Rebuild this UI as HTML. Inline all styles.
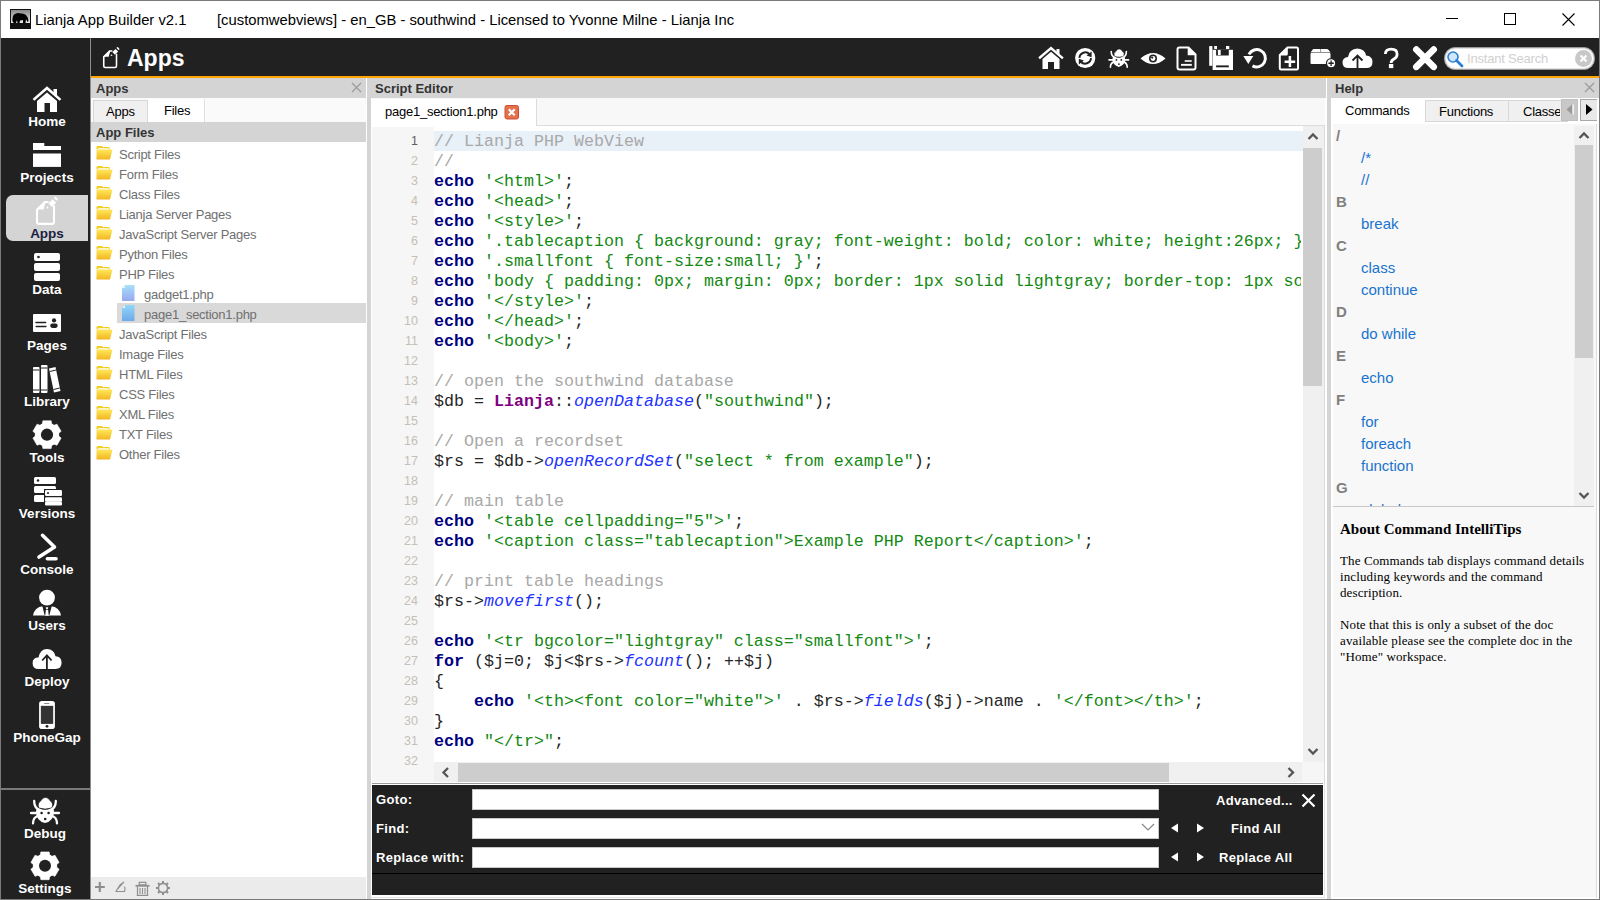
<!DOCTYPE html>
<html><head><meta charset="utf-8"><style>
*{margin:0;padding:0;box-sizing:border-box}
html,body{width:1600px;height:900px;overflow:hidden;background:#fff;font-family:"Liberation Sans",sans-serif}
.a{position:absolute}
.t{white-space:pre;position:absolute}
.si{position:absolute;left:3px;width:88px;text-align:center;color:#fff;font-weight:bold;font-size:13.5px;line-height:16px}
.ph{background:#d4d4d4}
.hd{font-size:13px;font-weight:bold;color:#333;line-height:18px}
.ui{font-size:13px;line-height:16px;letter-spacing:-0.25px}
.code{font-family:"Liberation Mono",monospace;font-size:16.67px;line-height:20px;color:#262626}
.kw{color:#000080;font-weight:bold}
.cm{color:#a8a8a8}
.st{color:#138913}
.fn{color:#2233ff;font-style:italic}
.cl{color:#800080;font-weight:bold}
.lnum{text-align:right;font-size:12.5px;line-height:20px}
.fl{font-size:13px;font-weight:bold;color:#fff;line-height:16px;letter-spacing:0.35px}
.hlp{color:#1874cd;font-size:15px;line-height:20px}
.hlh{color:#808080;font-size:15px;font-weight:bold;line-height:20px}
.serif{font-family:"Liberation Serif",serif;font-size:13px;color:#000;line-height:16px;letter-spacing:0.12px}
</style></head><body>
<div class="a" style="left:0;top:0;width:1600px;height:900px;border:1px solid #7a7a7a"></div>
<svg class="a" style="left:10px;top:9px" width="21" height="20" viewBox="0 0 21 20"><defs><linearGradient id="lg" x1="0" y1="0" x2="0" y2="1"><stop offset="0" stop-color="#8a8a8a"/><stop offset="1" stop-color="#e8e8e8"/></linearGradient></defs><rect x="0" y="0" width="21" height="20" fill="#111"/><rect x="1" y="1" width="19" height="13" fill="url(#lg)"/><path d="M2.5 12.5 Q2 6 5 5 Q8 3.5 11 4.5 Q14 4 16 6 Q18 8 18.5 12 L17.5 13 L16 10 L15.5 14 L13 14 L13 11 L10 11.5 L9.5 14 L7.5 14 L7 11 L6 14 L4 14 Z" fill="#000"/></svg>
<div class="t" id="tt1" style="left:35px;top:12px;font-size:14.8px;color:#000">Lianja App Builder v2.1</div>
<div class="t" id="tt2" style="left:217px;top:12px;font-size:14.8px;color:#000">[customwebviews] - en_GB - southwind - Licensed to Yvonne Milne - Lianja Inc</div>
<div class="a" style="left:1446px;top:18px;width:12px;height:1px;background:#000"></div>
<div class="a" style="left:1504px;top:13px;width:12px;height:12px;border:1px solid #000"></div>
<svg class="a" style="left:1562px;top:13px" width="13" height="13" viewBox="0 0 13 13"><path d="M0.5 0.5 L12.5 12.5 M12.5 0.5 L0.5 12.5" stroke="#000" stroke-width="1.1"/></svg>
<div class="a" style="left:1px;top:38px;width:89px;height:861px;background:#212121"></div>
<div class="a" style="left:90px;top:38px;width:1px;height:861px;background:#8c8c8c"></div>
<div class="a" style="left:1px;top:788px;width:89px;height:2px;background:#7a7a7a"></div>
<div class="a" style="left:6px;top:195px;width:82px;height:46px;background:#d4d4d4;border-radius:7px 0 0 7px"></div>
<div class="si" style="left:3px;top:114px;color:#fff">Home</div>
<div class="si" style="left:3px;top:170px;color:#fff">Projects</div>
<div class="si" style="left:3px;top:226px;color:#1a2040">Apps</div>
<div class="si" style="left:3px;top:282px;color:#fff">Data</div>
<div class="si" style="left:3px;top:338px;color:#fff">Pages</div>
<div class="si" style="left:3px;top:394px;color:#fff">Library</div>
<div class="si" style="left:3px;top:450px;color:#fff">Tools</div>
<div class="si" style="left:3px;top:506px;color:#fff">Versions</div>
<div class="si" style="left:3px;top:562px;color:#fff">Console</div>
<div class="si" style="left:3px;top:618px;color:#fff">Users</div>
<div class="si" style="left:3px;top:674px;color:#fff">Deploy</div>
<div class="si" style="left:3px;top:730px;color:#fff">PhoneGap</div>
<div class="si" style="left:1px;top:826px;color:#fff">Debug</div>
<div class="si" style="left:1px;top:881px;color:#fff">Settings</div>
<svg class="a" style="left:32px;top:85px" width="30" height="28" viewBox="0 0 30 28"><path d="M2.5 14 L15 3 L27.5 14" fill="none" stroke="#fff" stroke-width="2.6" stroke-linecap="square"/><rect x="21.5" y="4" width="3.5" height="6" fill="#fff"/><path d="M5 16 L15 7.5 L25 16 V27 H18 V18 H12.5 V27 H5 Z" fill="#fff"/></svg>
<svg class="a" style="left:33px;top:143px" width="28" height="25" viewBox="0 0 28 25"><path d="M0 0 H11.3 V2.9 H28 V7 H0 Z" fill="#fff"/><rect x="0" y="10.5" width="28" height="13.4" fill="#fff"/></svg>
<svg class="a" style="left:28px;top:190px" width="40" height="40" viewBox="0 0 40 40"><path d="M20.5 12 H16.8 L9 19.8 V32 Q9 33.9 10.9 33.9 H24.1 Q26 33.9 26 32 V15.5" fill="none" stroke="#fff" stroke-width="2.1"/><path d="M8.2 19.6 L16.9 10.9 L17.2 13.5 L15.6 19.6 Z" fill="#fff"/><path d="M28.2 12.75 L24.65 9.2 L20.4 13.45 L23.95 17 Z" fill="#fff"/><ellipse cx="28" cy="8.6" rx="2.4" ry="1.1" transform="rotate(45 28 8.6)" fill="#fff"/><path d="M18 18.6 L19.4 16.3 L20.8 18.2 Z" fill="#fff"/></svg>
<svg class="a" style="left:33px;top:252px" width="28" height="30" viewBox="0 0 28 30"><rect x="1" y="1" width="26" height="8" rx="2" fill="#fff"/><circle cx="5.5" cy="5" r="1.3" fill="#212121"/><rect x="1" y="11" width="26" height="8" rx="2" fill="#fff"/><rect x="1" y="21" width="26" height="8" rx="2" fill="#fff"/></svg>
<svg class="a" style="left:33px;top:314px" width="28" height="18" viewBox="0 0 28 18"><rect x="0" y="0" width="28" height="18" rx="1" fill="#fff"/><path d="M2.9 8.5 H12.7 M3.2 12.5 H13" stroke="#212121" stroke-width="1.3" stroke-linecap="round"/><circle cx="21" cy="6.4" r="2.1" fill="#212121"/><rect x="17.2" y="9.6" width="7.5" height="4.3" rx="2.1" fill="#212121"/></svg>
<svg class="a" style="left:32px;top:364px" width="30" height="30" viewBox="0 0 30 30"><rect x="1" y="3" width="6.5" height="26" rx="1" fill="#fff"/><rect x="9" y="1" width="6.5" height="28" rx="1" fill="#fff"/><path d="M17 4.5 L23.5 3 L28.5 27 L22 28.5 Z" fill="#fff"/><path d="M1 6 H7.5 M1 26 H7.5 M9 4 H15.5 M9 26 H15.5 M17.8 7.5 L24 6 M21.5 25.5 L27.8 24" stroke="#212121" stroke-width="1"/></svg>
<svg class="a" style="left:32px;top:419px" width="30" height="31" viewBox="0 0 30 31"><path d="M10.30 4.88 L10.85 1.81 L19.15 1.81 L19.70 4.88 L22.02 6.22 L24.96 5.16 L29.11 12.34 L26.72 14.36 L26.72 17.04 L29.11 19.06 L24.96 26.24 L22.02 25.18 L19.70 26.52 L19.15 29.59 L10.85 29.59 L10.30 26.52 L7.98 25.18 L5.04 26.24 L0.89 19.06 L3.28 17.04 L3.28 14.36 L0.89 12.34 L5.04 5.16 L7.98 6.22 Z" fill="#fff" stroke="#fff" stroke-width="0.6" stroke-linejoin="round"/><circle cx="15" cy="15.7" r="11.8" fill="#fff"/><circle cx="15" cy="15.7" r="6.1" fill="#212121"/></svg>
<svg class="a" style="left:33px;top:476px" width="30" height="30" viewBox="0 0 30 30"><rect x="1" y="1" width="22" height="7" rx="1.5" fill="#fff"/><circle cx="5" cy="4.5" r="1.2" fill="#212121"/><rect x="1" y="10" width="22" height="7" rx="1.5" fill="#fff"/><rect x="1" y="19" width="22" height="7" rx="1.5" fill="#fff"/><rect x="11" y="13" width="19" height="18" fill="#212121"/><rect x="12" y="14" width="17" height="6" rx="1.2" fill="#fff"/><circle cx="15" cy="17" r="1" fill="#212121"/><rect x="12" y="21.2" width="17" height="4.5" rx="1.2" fill="#fff"/><rect x="12" y="25.5" width="17" height="4" rx="1.2" fill="#fff"/></svg>
<svg class="a" style="left:34px;top:532px" width="28" height="30" viewBox="0 0 28 30"><path d="M8.5 3.3 L20.5 15 L5 25" fill="none" stroke="#fff" stroke-width="3.6" stroke-linecap="round" stroke-linejoin="round"/><path d="M13.3 26.8 H22.1" stroke="#fff" stroke-width="3.4" stroke-linecap="round"/></svg>
<svg class="a" style="left:33px;top:589px" width="28" height="28" viewBox="0 0 28 28"><circle cx="14" cy="8.6" r="7.9" fill="#fff"/><path d="M0 26.6 Q1.5 18 10 17.3 H18 Q26.5 18 28 26.6 Z" fill="#fff"/><path d="M9.3 17.1 H18.8 L16.4 26 H11.6 Z" fill="#212121"/><path d="M12.7 18.3 H15.3 L14.8 20 H13.2 Z M12.9 20.7 H15.1 L15.8 26.7 H12.2 Z" fill="#fff"/></svg>
<svg class="a" style="left:32px;top:647px" width="31" height="24" viewBox="0 0 31 24"><path d="M6.5 22 Q0.6 22 0.6 16 Q0.6 10.5 6.5 10.5 Q8 2 15 1.9 Q22 2 23.5 9.2 Q29.6 9.5 29.6 15.8 Q29.6 22 23.5 22 Z" fill="#fff"/><path d="M14.9 23 V8.4 M10.2 13.5 L14.9 8.4 L19.6 13.5" fill="none" stroke="#212121" stroke-width="1.8"/></svg>
<svg class="a" style="left:38px;top:700px" width="18" height="30" viewBox="0 0 18 30"><rect x="1.1" y="1" width="15.8" height="28" rx="2.8" fill="#fff"/><rect x="3.1" y="6.1" width="11.8" height="17.6" fill="#333" stroke="#1a1a1a" stroke-width="0.5"/><rect x="6" y="3" width="5.5" height="0.8" rx="0.4" fill="#666"/><circle cx="9" cy="26.3" r="1.4" fill="#212121"/></svg>
<svg class="a" style="left:30px;top:796px" width="32" height="30" viewBox="0 0 32 30"><path d="M6 15 Q6.5 11 9.5 12.5 Q15 15 20.5 12.5 Q23.5 11 24 15 Q24 25 15 27 Q6 25 6 15 Z" fill="#fff"/><path d="M8.6 12 Q7 7 10.8 4.8 Q12.5 1.3 15.5 1.3 Q18.5 1.3 20.2 4.8 Q24 7 22 12 Q15 14.3 8.6 12 Z" fill="#fff" stroke="#212121" stroke-width="0.9"/><path d="M4.2 5 Q4 12 10 14 M25.8 5 Q26 12 20 14 M1 17 H29 M3 27.4 Q3 21 9 19.5 M27 27.4 Q27 21 21 19.5" fill="none" stroke="#fff" stroke-width="2.3" stroke-linecap="round"/><circle cx="11.6" cy="17" r="1.3" fill="#212121"/><circle cx="18.6" cy="17" r="1.3" fill="#212121"/><circle cx="15.2" cy="23" r="1.3" fill="#212121"/></svg>
<svg class="a" style="left:30px;top:850px" width="30" height="31" viewBox="0 0 30 31"><path d="M10.30 4.98 L10.85 1.91 L19.15 1.91 L19.70 4.98 L22.02 6.32 L24.96 5.26 L29.11 12.44 L26.72 14.46 L26.72 17.14 L29.11 19.16 L24.96 26.34 L22.02 25.28 L19.70 26.62 L19.15 29.69 L10.85 29.69 L10.30 26.62 L7.98 25.28 L5.04 26.34 L0.89 19.16 L3.28 17.14 L3.28 14.46 L0.89 12.44 L5.04 5.26 L7.98 6.32 Z" fill="#fff" stroke="#fff" stroke-width="0.6" stroke-linejoin="round"/><circle cx="15" cy="15.8" r="11.8" fill="#fff"/><circle cx="15" cy="15.8" r="6.0" fill="#212121"/></svg>
<div class="a" style="left:91px;top:38px;width:1508px;height:38px;background:#212121"></div>
<div class="a" style="left:91px;top:76px;width:1508px;height:2px;background:#ffa500"></div>
<svg class="a" style="left:97px;top:42px" width="30" height="30" viewBox="0 0 30 30"><g transform="scale(0.75)"><path d="M20.5 12 H16.8 L9 19.8 V32 Q9 33.9 10.9 33.9 H24.1 Q26 33.9 26 32 V15.5" fill="none" stroke="#fff" stroke-width="2.1"/><path d="M8.2 19.6 L16.9 10.9 L17.2 13.5 L15.6 19.6 Z" fill="#fff"/><path d="M28.2 12.75 L24.65 9.2 L20.4 13.45 L23.95 17 Z" fill="#fff"/><ellipse cx="28" cy="8.6" rx="2.4" ry="1.1" transform="rotate(45 28 8.6)" fill="#fff"/><path d="M18 18.6 L19.4 16.3 L20.8 18.2 Z" fill="#fff"/></g></svg>
<div class="t" style="left:127px;top:45px;font-size:23px;font-weight:bold;color:#fff">Apps</div>
<svg class="a" style="left:1038px;top:46px" width="26" height="24" viewBox="0 0 26 24"><path d="M2 11.5 L13 2 L24 11.5" fill="none" stroke="#fff" stroke-width="2.4" stroke-linecap="square"/><rect x="18.5" y="3" width="3" height="5" fill="#fff"/><path d="M4.5 13 L13 5.8 L21.5 13 V23 H16 V16 H10 V23 H4.5 Z" fill="#fff"/></svg>
<svg class="a" style="left:1075px;top:47px" width="22" height="22" viewBox="0 0 22 22"><circle cx="10.2" cy="11" r="10.1" fill="#fff"/><path d="M4.4 10.8 A5.9 5.9 0 0 1 14.6 7.3" fill="none" stroke="#212121" stroke-width="2"/><path d="M16.6 4.6 L16.6 10.2 L11.5 8.6 Z" fill="#212121"/><path d="M16 11.2 A5.9 5.9 0 0 1 5.8 14.7" fill="none" stroke="#212121" stroke-width="2"/><path d="M3.8 17.4 L3.8 11.8 L8.9 13.4 Z" fill="#212121"/></svg>
<svg class="a" style="left:1108px;top:47px" width="22" height="22" viewBox="0 0 22 22"><g transform="translate(0.3 1) scale(0.7)"><path d="M6 15 Q6.5 11 9.5 12.5 Q15 15 20.5 12.5 Q23.5 11 24 15 Q24 25 15 27 Q6 25 6 15 Z" fill="#fff"/><path d="M8.6 12 Q7 7 10.8 4.8 Q12.5 1.3 15.5 1.3 Q18.5 1.3 20.2 4.8 Q24 7 22 12 Q15 14.3 8.6 12 Z" fill="#fff" stroke="#212121" stroke-width="0.9"/><path d="M4.2 5 Q4 12 10 14 M25.8 5 Q26 12 20 14 M1 17 H29 M3 27.4 Q3 21 9 19.5 M27 27.4 Q27 21 21 19.5" fill="none" stroke="#fff" stroke-width="2.3" stroke-linecap="round"/><circle cx="11.6" cy="17" r="1.3" fill="#212121"/><circle cx="18.6" cy="17" r="1.3" fill="#212121"/><circle cx="15.2" cy="23" r="1.3" fill="#212121"/></g></svg>
<svg class="a" style="left:1140px;top:52px" width="26" height="13" viewBox="0 0 26 13"><path d="M0.5 6.5 Q13 -4.5 25.5 6.5 Q13 17.5 0.5 6.5 Z" fill="#fff"/><circle cx="13" cy="6.5" r="4" fill="#212121"/><circle cx="13" cy="6.5" r="2.4" fill="#fff"/><circle cx="12.2" cy="5.6" r="1.1" fill="#212121"/></svg>
<svg class="a" style="left:1176px;top:46px" width="22" height="25" viewBox="0 0 22 25"><path d="M3.5 1.5 H12.5 L19.5 8.5 V21.5 Q19.5 23.5 17.5 23.5 H3.5 Q1.5 23.5 1.5 21.5 V3.5 Q1.5 1.5 3.5 1.5 Z" fill="none" stroke="#fff" stroke-width="2"/><path d="M12.5 1.5 V8.5 H19.5" fill="#fff" stroke="#fff" stroke-width="1.6"/><rect x="8.7" y="14.2" width="7" height="1.6" fill="#fff"/><rect x="5" y="17.9" width="10.8" height="1.9" fill="#fff"/></svg>
<svg class="a" style="left:1208px;top:46px" width="27" height="25" viewBox="0 0 27 25"><rect x="1.2" y="0.1" width="3.2" height="19.7" fill="#fff"/><rect x="6.2" y="0" width="2.8" height="3" fill="#fff"/><rect x="18" y="0" width="3.3" height="3" fill="#fff"/><rect x="4.6" y="3.8" width="20.4" height="20.2" fill="#fff"/><rect x="8.1" y="3.8" width="12.7" height="5.7" fill="#212121"/><rect x="9.9" y="4" width="2.8" height="5" fill="#fff"/><rect x="8.1" y="19.4" width="12.7" height="1.9" fill="#212121"/></svg>
<svg class="a" style="left:1242px;top:47px" width="26" height="24" viewBox="0 0 26 24"><path d="M10.5 18.9 A8.7 8.7 0 1 0 6.9 7.4" fill="none" stroke="#fff" stroke-width="3"/><path d="M1.3 9 L11.3 9 L6.3 16.9 Z" fill="#fff"/></svg>
<svg class="a" style="left:1278px;top:46px" width="22" height="25" viewBox="0 0 22 25"><path d="M1.8 9 L9.5 1.5 H18.5 Q20 1.5 20 3 V22 Q20 23.5 18.5 23.5 H3.3 Q1.8 23.5 1.8 22 Z" fill="none" stroke="#fff" stroke-width="2"/><path d="M1.8 9.5 L9.8 1.5 V8 Q9.8 9.5 8.3 9.5 Z" fill="#fff"/><path d="M11.9 10 V21 M6.6 15.7 H17.2" stroke="#fff" stroke-width="2.5"/></svg>
<svg class="a" style="left:1310px;top:48px" width="28" height="20" viewBox="0 0 28 20"><path d="M3.5 1 H16.5 Q18 1 18.8 2.2 L20.5 4.5 H0.5 L2.2 2.2 Q3 1 3.5 1 Z" fill="#fff"/><rect x="10.2" y="1" width="0.9" height="3.5" fill="#888"/><rect x="0.5" y="5" width="20" height="11" rx="1" fill="#fff"/><circle cx="21.1" cy="15.25" r="4.6" fill="#fff" stroke="#212121" stroke-width="1.2"/><path d="M21.1 12.5 V18 M18.4 15.25 H23.8" stroke="#212121" stroke-width="1.3"/></svg>
<svg class="a" style="left:1342px;top:47px" width="31" height="22" viewBox="0 0 31 22"><path d="M6.5 21 Q0.5 21 0.5 15.5 Q0.5 10.5 6 10 Q7 2 15.5 1.5 Q23 2 24 8.5 Q30.5 9 30.5 15 Q30.5 21 24.5 21 Z" fill="#fff"/><path d="M15.5 22 V8.5 M10.5 13.5 L15.5 8.5 L20.5 13.5" fill="none" stroke="#212121" stroke-width="1.8"/></svg>
<svg class="a" style="left:1382px;top:47px" width="18" height="22" viewBox="0 0 18 22"><path d="M3.4 7 Q3.4 2.2 9.2 2.2 Q15.1 2.2 15.1 7.2 Q15.1 10.2 12 12 Q9.1 13.6 9.1 16" fill="none" stroke="#fff" stroke-width="2.8"/><rect x="6.9" y="17" width="4.4" height="4.1" fill="#fff"/></svg>
<svg class="a" style="left:1412px;top:46px" width="26" height="25" viewBox="0 0 26 25"><path d="M4.3 3.5 L21.7 20.8 M21.7 3.5 L4.3 20.8" stroke="#fff" stroke-width="6.6" stroke-linecap="round"/></svg>
<div class="a" style="left:1444px;top:47px;width:151px;height:23px;border-radius:11px;background:#fff;border:1.5px solid #9a9a9a;box-shadow:inset 0 0 0 1px #e0e0e0"></div>
<svg class="a" style="left:1446px;top:50px" width="19" height="18" viewBox="0 0 19 18"><circle cx="7" cy="7" r="5" fill="#cfe6fb" stroke="#2a7fd4" stroke-width="1.6"/><path d="M10.5 10.5 L16 16" stroke="#2a7fd4" stroke-width="2.8" stroke-linecap="round"/></svg>
<div class="t" style="left:1467px;top:51px;font-size:13px;color:#d0d0d0;letter-spacing:-0.2px">Instant Search</div>
<svg class="a" style="left:1574px;top:49px" width="19" height="19" viewBox="0 0 19 19"><circle cx="9.5" cy="9.5" r="8.5" fill="#c8c8c8"/><path d="M6.5 6.5 L12.5 12.5 M12.5 6.5 L6.5 12.5" stroke="#fff" stroke-width="2.2"/></svg>
<div class="a ph" style="left:91px;top:78px;width:275px;height:20px"></div>
<div class="t hd" style="left:96px;top:80px">Apps</div>
<svg class="a" style="left:351px;top:82px" width="11" height="11" viewBox="0 0 11 11"><path d="M1 1 L10 10 M10 1 L1 10" stroke="#9a9a9a" stroke-width="1.2"/></svg>
<div class="a" style="left:91px;top:98px;width:275px;height:24px;background:#fafafa"></div>
<div class="a" style="left:93px;top:100px;width:55px;height:22px;background:#f0f0f0;border:1px solid #d8d8d8;border-bottom:none"></div>
<div class="a" style="left:148px;top:99px;width:57px;height:23px;background:#fff;border-right:1px solid #e0e0e0"></div>
<div class="t ui" style="left:106px;top:104px;color:#000">Apps</div>
<div class="t ui" style="left:164px;top:103px;color:#000">Files</div>
<div class="a ph" style="left:91px;top:122px;width:275px;height:20px"></div>
<div class="t hd" style="left:96px;top:124px">App Files</div>
<div class="a" style="left:117px;top:303px;width:249px;height:20px;background:#d9d9d9"></div>
<svg class="a" style="left:96px;top:146px" width="17" height="14" viewBox="0 0 17 14"><defs><linearGradient id="fg" x1="0" y1="0" x2="0" y2="1"><stop offset="0" stop-color="#ffe85a"/><stop offset="1" stop-color="#f2b620"/></linearGradient></defs><path d="M0.5 1 Q0.5 0 1.5 0 H6 L7 1 H13.5 V3 H0.5 Z" fill="#f5d020"/><rect x="1.5" y="2" width="11.5" height="3" fill="#fff" stroke="#e8c840" stroke-width="0.5"/><path d="M0.5 13.5 V3.5 H16.5 L14 13.5 Z" fill="url(#fg)"/></svg>
<div class="t ui" style="left:119px;top:147px;color:#707070">Script Files</div>
<svg class="a" style="left:96px;top:166px" width="17" height="14" viewBox="0 0 17 14"><defs><linearGradient id="fg" x1="0" y1="0" x2="0" y2="1"><stop offset="0" stop-color="#ffe85a"/><stop offset="1" stop-color="#f2b620"/></linearGradient></defs><path d="M0.5 1 Q0.5 0 1.5 0 H6 L7 1 H13.5 V3 H0.5 Z" fill="#f5d020"/><rect x="1.5" y="2" width="11.5" height="3" fill="#fff" stroke="#e8c840" stroke-width="0.5"/><path d="M0.5 13.5 V3.5 H16.5 L14 13.5 Z" fill="url(#fg)"/></svg>
<div class="t ui" style="left:119px;top:167px;color:#707070">Form Files</div>
<svg class="a" style="left:96px;top:186px" width="17" height="14" viewBox="0 0 17 14"><defs><linearGradient id="fg" x1="0" y1="0" x2="0" y2="1"><stop offset="0" stop-color="#ffe85a"/><stop offset="1" stop-color="#f2b620"/></linearGradient></defs><path d="M0.5 1 Q0.5 0 1.5 0 H6 L7 1 H13.5 V3 H0.5 Z" fill="#f5d020"/><rect x="1.5" y="2" width="11.5" height="3" fill="#fff" stroke="#e8c840" stroke-width="0.5"/><path d="M0.5 13.5 V3.5 H16.5 L14 13.5 Z" fill="url(#fg)"/></svg>
<div class="t ui" style="left:119px;top:187px;color:#707070">Class Files</div>
<svg class="a" style="left:96px;top:206px" width="17" height="14" viewBox="0 0 17 14"><defs><linearGradient id="fg" x1="0" y1="0" x2="0" y2="1"><stop offset="0" stop-color="#ffe85a"/><stop offset="1" stop-color="#f2b620"/></linearGradient></defs><path d="M0.5 1 Q0.5 0 1.5 0 H6 L7 1 H13.5 V3 H0.5 Z" fill="#f5d020"/><rect x="1.5" y="2" width="11.5" height="3" fill="#fff" stroke="#e8c840" stroke-width="0.5"/><path d="M0.5 13.5 V3.5 H16.5 L14 13.5 Z" fill="url(#fg)"/></svg>
<div class="t ui" style="left:119px;top:207px;color:#707070">Lianja Server Pages</div>
<svg class="a" style="left:96px;top:226px" width="17" height="14" viewBox="0 0 17 14"><defs><linearGradient id="fg" x1="0" y1="0" x2="0" y2="1"><stop offset="0" stop-color="#ffe85a"/><stop offset="1" stop-color="#f2b620"/></linearGradient></defs><path d="M0.5 1 Q0.5 0 1.5 0 H6 L7 1 H13.5 V3 H0.5 Z" fill="#f5d020"/><rect x="1.5" y="2" width="11.5" height="3" fill="#fff" stroke="#e8c840" stroke-width="0.5"/><path d="M0.5 13.5 V3.5 H16.5 L14 13.5 Z" fill="url(#fg)"/></svg>
<div class="t ui" style="left:119px;top:227px;color:#707070">JavaScript Server Pages</div>
<svg class="a" style="left:96px;top:246px" width="17" height="14" viewBox="0 0 17 14"><defs><linearGradient id="fg" x1="0" y1="0" x2="0" y2="1"><stop offset="0" stop-color="#ffe85a"/><stop offset="1" stop-color="#f2b620"/></linearGradient></defs><path d="M0.5 1 Q0.5 0 1.5 0 H6 L7 1 H13.5 V3 H0.5 Z" fill="#f5d020"/><rect x="1.5" y="2" width="11.5" height="3" fill="#fff" stroke="#e8c840" stroke-width="0.5"/><path d="M0.5 13.5 V3.5 H16.5 L14 13.5 Z" fill="url(#fg)"/></svg>
<div class="t ui" style="left:119px;top:247px;color:#707070">Python Files</div>
<svg class="a" style="left:96px;top:266px" width="17" height="14" viewBox="0 0 17 14"><defs><linearGradient id="fg" x1="0" y1="0" x2="0" y2="1"><stop offset="0" stop-color="#ffe85a"/><stop offset="1" stop-color="#f2b620"/></linearGradient></defs><path d="M0.5 1 Q0.5 0 1.5 0 H6 L7 1 H13.5 V3 H0.5 Z" fill="#f5d020"/><rect x="1.5" y="2" width="11.5" height="3" fill="#fff" stroke="#e8c840" stroke-width="0.5"/><path d="M0.5 13.5 V3.5 H16.5 L14 13.5 Z" fill="url(#fg)"/></svg>
<div class="t ui" style="left:119px;top:267px;color:#707070">PHP Files</div>
<svg class="a" style="left:96px;top:326px" width="17" height="14" viewBox="0 0 17 14"><defs><linearGradient id="fg" x1="0" y1="0" x2="0" y2="1"><stop offset="0" stop-color="#ffe85a"/><stop offset="1" stop-color="#f2b620"/></linearGradient></defs><path d="M0.5 1 Q0.5 0 1.5 0 H6 L7 1 H13.5 V3 H0.5 Z" fill="#f5d020"/><rect x="1.5" y="2" width="11.5" height="3" fill="#fff" stroke="#e8c840" stroke-width="0.5"/><path d="M0.5 13.5 V3.5 H16.5 L14 13.5 Z" fill="url(#fg)"/></svg>
<div class="t ui" style="left:119px;top:327px;color:#707070">JavaScript Files</div>
<svg class="a" style="left:96px;top:346px" width="17" height="14" viewBox="0 0 17 14"><defs><linearGradient id="fg" x1="0" y1="0" x2="0" y2="1"><stop offset="0" stop-color="#ffe85a"/><stop offset="1" stop-color="#f2b620"/></linearGradient></defs><path d="M0.5 1 Q0.5 0 1.5 0 H6 L7 1 H13.5 V3 H0.5 Z" fill="#f5d020"/><rect x="1.5" y="2" width="11.5" height="3" fill="#fff" stroke="#e8c840" stroke-width="0.5"/><path d="M0.5 13.5 V3.5 H16.5 L14 13.5 Z" fill="url(#fg)"/></svg>
<div class="t ui" style="left:119px;top:347px;color:#707070">Image Files</div>
<svg class="a" style="left:96px;top:366px" width="17" height="14" viewBox="0 0 17 14"><defs><linearGradient id="fg" x1="0" y1="0" x2="0" y2="1"><stop offset="0" stop-color="#ffe85a"/><stop offset="1" stop-color="#f2b620"/></linearGradient></defs><path d="M0.5 1 Q0.5 0 1.5 0 H6 L7 1 H13.5 V3 H0.5 Z" fill="#f5d020"/><rect x="1.5" y="2" width="11.5" height="3" fill="#fff" stroke="#e8c840" stroke-width="0.5"/><path d="M0.5 13.5 V3.5 H16.5 L14 13.5 Z" fill="url(#fg)"/></svg>
<div class="t ui" style="left:119px;top:367px;color:#707070">HTML Files</div>
<svg class="a" style="left:96px;top:386px" width="17" height="14" viewBox="0 0 17 14"><defs><linearGradient id="fg" x1="0" y1="0" x2="0" y2="1"><stop offset="0" stop-color="#ffe85a"/><stop offset="1" stop-color="#f2b620"/></linearGradient></defs><path d="M0.5 1 Q0.5 0 1.5 0 H6 L7 1 H13.5 V3 H0.5 Z" fill="#f5d020"/><rect x="1.5" y="2" width="11.5" height="3" fill="#fff" stroke="#e8c840" stroke-width="0.5"/><path d="M0.5 13.5 V3.5 H16.5 L14 13.5 Z" fill="url(#fg)"/></svg>
<div class="t ui" style="left:119px;top:387px;color:#707070">CSS Files</div>
<svg class="a" style="left:96px;top:406px" width="17" height="14" viewBox="0 0 17 14"><defs><linearGradient id="fg" x1="0" y1="0" x2="0" y2="1"><stop offset="0" stop-color="#ffe85a"/><stop offset="1" stop-color="#f2b620"/></linearGradient></defs><path d="M0.5 1 Q0.5 0 1.5 0 H6 L7 1 H13.5 V3 H0.5 Z" fill="#f5d020"/><rect x="1.5" y="2" width="11.5" height="3" fill="#fff" stroke="#e8c840" stroke-width="0.5"/><path d="M0.5 13.5 V3.5 H16.5 L14 13.5 Z" fill="url(#fg)"/></svg>
<div class="t ui" style="left:119px;top:407px;color:#707070">XML Files</div>
<svg class="a" style="left:96px;top:426px" width="17" height="14" viewBox="0 0 17 14"><defs><linearGradient id="fg" x1="0" y1="0" x2="0" y2="1"><stop offset="0" stop-color="#ffe85a"/><stop offset="1" stop-color="#f2b620"/></linearGradient></defs><path d="M0.5 1 Q0.5 0 1.5 0 H6 L7 1 H13.5 V3 H0.5 Z" fill="#f5d020"/><rect x="1.5" y="2" width="11.5" height="3" fill="#fff" stroke="#e8c840" stroke-width="0.5"/><path d="M0.5 13.5 V3.5 H16.5 L14 13.5 Z" fill="url(#fg)"/></svg>
<div class="t ui" style="left:119px;top:427px;color:#707070">TXT Files</div>
<svg class="a" style="left:96px;top:446px" width="17" height="14" viewBox="0 0 17 14"><defs><linearGradient id="fg" x1="0" y1="0" x2="0" y2="1"><stop offset="0" stop-color="#ffe85a"/><stop offset="1" stop-color="#f2b620"/></linearGradient></defs><path d="M0.5 1 Q0.5 0 1.5 0 H6 L7 1 H13.5 V3 H0.5 Z" fill="#f5d020"/><rect x="1.5" y="2" width="11.5" height="3" fill="#fff" stroke="#e8c840" stroke-width="0.5"/><path d="M0.5 13.5 V3.5 H16.5 L14 13.5 Z" fill="url(#fg)"/></svg>
<div class="t ui" style="left:119px;top:447px;color:#707070">Other Files</div>
<svg class="a" style="left:122px;top:285px" width="13" height="16" viewBox="0 0 13 16"><defs><linearGradient id="fi1" x1="0" y1="0" x2="0" y2="1"><stop offset="0" stop-color="#a8e0f8"/><stop offset="1" stop-color="#98a8f0"/></linearGradient></defs><path d="M3 0 H12.5 V16 H0 V3 Z" fill="url(#fi1)"/><path d="M0 3 L3 0 V3 Z" fill="#e8f4fc"/></svg>
<div class="t ui" style="left:144px;top:287px;color:#707070">gadget1.php</div>
<svg class="a" style="left:122px;top:305px" width="13" height="16" viewBox="0 0 13 16"><defs><linearGradient id="fi2" x1="0" y1="0" x2="0" y2="1"><stop offset="0" stop-color="#90d8f8"/><stop offset="1" stop-color="#70a8e8"/></linearGradient></defs><path d="M3 0 H12.5 V16 H0 V3 Z" fill="url(#fi2)"/><path d="M0 3 L3 0 V3 Z" fill="#e8f4fc"/></svg>
<div class="t ui" style="left:144px;top:307px;color:#707070">page1_section1.php</div>
<div class="a" style="left:91px;top:877px;width:275px;height:22px;background:#ebebeb"></div>
<svg class="a" style="left:94px;top:881px" width="12" height="12" viewBox="0 0 12 12"><path d="M5.8 1 V11 M1 6 H10.8" stroke="#8e8e8e" stroke-width="2.2"/></svg>
<svg class="a" style="left:114px;top:881px" width="13" height="12" viewBox="0 0 13 12"><path d="M1.5 10.5 L9.5 1.5 M2.5 9.5 L6 4 L10 1 M1.5 10.5 H10.5 Q11.5 8 10.5 5.5" fill="none" stroke="#8e8e8e" stroke-width="1.1"/></svg>
<svg class="a" style="left:135px;top:881px" width="15" height="16" viewBox="0 0 15 16"><rect x="4.2" y="1.3" width="6.6" height="2.6" fill="none" stroke="#8e8e8e" stroke-width="1.2"/><path d="M0.5 4.8 H14.5" stroke="#8e8e8e" stroke-width="1.8"/><path d="M2.5 5.5 V14.3 H12.5 V5.5 M1.7 14.5 H13.3" fill="none" stroke="#8e8e8e" stroke-width="1.2"/><path d="M5 7 V13 M7.5 7 V13 M10 7 V13" stroke="#8e8e8e" stroke-width="1.1"/></svg>
<svg class="a" style="left:156px;top:881px" width="14" height="14" viewBox="0 0 14 14"><rect x="6" y="0" width="2" height="3" fill="#8e8e8e" transform="rotate(0 7 7)"/><rect x="6" y="0" width="2" height="3" fill="#8e8e8e" transform="rotate(45 7 7)"/><rect x="6" y="0" width="2" height="3" fill="#8e8e8e" transform="rotate(90 7 7)"/><rect x="6" y="0" width="2" height="3" fill="#8e8e8e" transform="rotate(135 7 7)"/><rect x="6" y="0" width="2" height="3" fill="#8e8e8e" transform="rotate(180 7 7)"/><rect x="6" y="0" width="2" height="3" fill="#8e8e8e" transform="rotate(225 7 7)"/><rect x="6" y="0" width="2" height="3" fill="#8e8e8e" transform="rotate(270 7 7)"/><rect x="6" y="0" width="2" height="3" fill="#8e8e8e" transform="rotate(315 7 7)"/><circle cx="7" cy="7" r="4.6" fill="none" stroke="#8e8e8e" stroke-width="1.6"/></svg>
<div class="a ph" style="left:367px;top:78px;width:959px;height:20px"></div>
<div class="a ph" style="left:367px;top:98px;width:4px;height:801px"></div>
<div class="t hd" style="left:375px;top:80px">Script Editor</div>
<div class="a" style="left:371px;top:98px;width:954px;height:27px;background:#f8f8f8"></div>
<div class="a" style="left:371px;top:99px;width:166px;height:27px;background:#fff;border-right:1px solid #dcdcdc"></div>
<div class="t ui" style="left:385px;top:104px;color:#000">page1_section1.php</div>
<svg class="a" style="left:504px;top:105px" width="15" height="15" viewBox="0 0 15 15"><rect x="1" y="0.5" width="13.5" height="13.5" rx="2" fill="#e4704c" stroke="#d04a32"/><path d="M4.8 4.3 L10.7 10.2 M10.7 4.3 L4.8 10.2" stroke="#fff" stroke-width="2.2"/></svg>
<div class="a" style="left:537px;top:125px;width:788px;height:1px;background:#dcdcdc"></div>
<div class="a" style="left:371px;top:126px;width:954px;height:658px;background:#fff"></div>
<div class="a" style="left:1324px;top:125px;width:1px;height:659px;background:#dcdcdc"></div>
<div class="a" style="left:372px;top:127px;width:62px;height:655px;background:#f6f6f6"></div>
<div class="a" style="left:434px;top:131px;width:869px;height:20px;background:#e8f0f8"></div>
<div class="t lnum" style="left:372px;top:131px;width:46px;color:#606060">1</div>
<div class="t lnum" style="left:372px;top:151px;width:46px;color:#c4c0b8">2</div>
<div class="t lnum" style="left:372px;top:171px;width:46px;color:#c4c0b8">3</div>
<div class="t lnum" style="left:372px;top:191px;width:46px;color:#c4c0b8">4</div>
<div class="t lnum" style="left:372px;top:211px;width:46px;color:#c4c0b8">5</div>
<div class="t lnum" style="left:372px;top:231px;width:46px;color:#c4c0b8">6</div>
<div class="t lnum" style="left:372px;top:251px;width:46px;color:#c4c0b8">7</div>
<div class="t lnum" style="left:372px;top:271px;width:46px;color:#c4c0b8">8</div>
<div class="t lnum" style="left:372px;top:291px;width:46px;color:#c4c0b8">9</div>
<div class="t lnum" style="left:372px;top:311px;width:46px;color:#c4c0b8">10</div>
<div class="t lnum" style="left:372px;top:331px;width:46px;color:#c4c0b8">11</div>
<div class="t lnum" style="left:372px;top:351px;width:46px;color:#c4c0b8">12</div>
<div class="t lnum" style="left:372px;top:371px;width:46px;color:#c4c0b8">13</div>
<div class="t lnum" style="left:372px;top:391px;width:46px;color:#c4c0b8">14</div>
<div class="t lnum" style="left:372px;top:411px;width:46px;color:#c4c0b8">15</div>
<div class="t lnum" style="left:372px;top:431px;width:46px;color:#c4c0b8">16</div>
<div class="t lnum" style="left:372px;top:451px;width:46px;color:#c4c0b8">17</div>
<div class="t lnum" style="left:372px;top:471px;width:46px;color:#c4c0b8">18</div>
<div class="t lnum" style="left:372px;top:491px;width:46px;color:#c4c0b8">19</div>
<div class="t lnum" style="left:372px;top:511px;width:46px;color:#c4c0b8">20</div>
<div class="t lnum" style="left:372px;top:531px;width:46px;color:#c4c0b8">21</div>
<div class="t lnum" style="left:372px;top:551px;width:46px;color:#c4c0b8">22</div>
<div class="t lnum" style="left:372px;top:571px;width:46px;color:#c4c0b8">23</div>
<div class="t lnum" style="left:372px;top:591px;width:46px;color:#c4c0b8">24</div>
<div class="t lnum" style="left:372px;top:611px;width:46px;color:#c4c0b8">25</div>
<div class="t lnum" style="left:372px;top:631px;width:46px;color:#c4c0b8">26</div>
<div class="t lnum" style="left:372px;top:651px;width:46px;color:#c4c0b8">27</div>
<div class="t lnum" style="left:372px;top:671px;width:46px;color:#c4c0b8">28</div>
<div class="t lnum" style="left:372px;top:691px;width:46px;color:#c4c0b8">29</div>
<div class="t lnum" style="left:372px;top:711px;width:46px;color:#c4c0b8">30</div>
<div class="t lnum" style="left:372px;top:731px;width:46px;color:#c4c0b8">31</div>
<div class="t lnum" style="left:372px;top:751px;width:46px;color:#c4c0b8">32</div>
<div class="a" style="left:434px;top:126px;width:867px;height:636px;overflow:hidden"><div class="t code" style="left:0px;top:6px"><span class="cm">// Lianja PHP WebView</span></div><div class="t code" style="left:0px;top:26px"><span class="cm">//</span></div><div class="t code" style="left:0px;top:46px"><span class="kw">echo</span> <span class="st">'&lt;html&gt;'</span>;</div><div class="t code" style="left:0px;top:66px"><span class="kw">echo</span> <span class="st">'&lt;head&gt;'</span>;</div><div class="t code" style="left:0px;top:86px"><span class="kw">echo</span> <span class="st">'&lt;style&gt;'</span>;</div><div class="t code" style="left:0px;top:106px"><span class="kw">echo</span> <span class="st">'.tablecaption { background: gray; font-weight: bold; color: white; height:26px; }'</span>;</div><div class="t code" style="left:0px;top:126px"><span class="kw">echo</span> <span class="st">'.smallfont { font-size:small; }'</span>;</div><div class="t code" style="left:0px;top:146px"><span class="kw">echo</span> <span class="st">'body { padding: 0px; margin: 0px; border: 1px solid lightgray; border-top: 1px solid lightgray; }'</span>;</div><div class="t code" style="left:0px;top:166px"><span class="kw">echo</span> <span class="st">'&lt;/style&gt;'</span>;</div><div class="t code" style="left:0px;top:186px"><span class="kw">echo</span> <span class="st">'&lt;/head&gt;'</span>;</div><div class="t code" style="left:0px;top:206px"><span class="kw">echo</span> <span class="st">'&lt;body&gt;'</span>;</div><div class="t code" style="left:0px;top:226px"></div><div class="t code" style="left:0px;top:246px"><span class="cm">// open the southwind database</span></div><div class="t code" style="left:0px;top:266px">$db = <span class="cl">Lianja</span>::<span class="fn">openDatabase</span>(<span class="st">"southwind"</span>);</div><div class="t code" style="left:0px;top:286px"></div><div class="t code" style="left:0px;top:306px"><span class="cm">// Open a recordset</span></div><div class="t code" style="left:0px;top:326px">$rs = $db-&gt;<span class="fn">openRecordSet</span>(<span class="st">"select * from example"</span>);</div><div class="t code" style="left:0px;top:346px"></div><div class="t code" style="left:0px;top:366px"><span class="cm">// main table</span></div><div class="t code" style="left:0px;top:386px"><span class="kw">echo</span> <span class="st">'&lt;table cellpadding="5"&gt;'</span>;</div><div class="t code" style="left:0px;top:406px"><span class="kw">echo</span> <span class="st">'&lt;caption class="tablecaption"&gt;Example PHP Report&lt;/caption&gt;'</span>;</div><div class="t code" style="left:0px;top:426px"></div><div class="t code" style="left:0px;top:446px"><span class="cm">// print table headings</span></div><div class="t code" style="left:0px;top:466px">$rs-&gt;<span class="fn">movefirst</span>();</div><div class="t code" style="left:0px;top:486px"></div><div class="t code" style="left:0px;top:506px"><span class="kw">echo</span> <span class="st">'&lt;tr bgcolor="lightgray" class="smallfont"&gt;'</span>;</div><div class="t code" style="left:0px;top:526px"><span class="kw">for</span> ($j=0; $j&lt;$rs-&gt;<span class="fn">fcount</span>(); ++$j)</div><div class="t code" style="left:0px;top:546px">{</div><div class="t code" style="left:0px;top:566px">    <span class="kw">echo</span> <span class="st">'&lt;th&gt;&lt;font color="white"&gt;'</span> . $rs-&gt;<span class="fn">fields</span>($j)-&gt;name . <span class="st">'&lt;/font&gt;&lt;/th&gt;'</span>;</div><div class="t code" style="left:0px;top:586px">}</div><div class="t code" style="left:0px;top:606px"><span class="kw">echo</span> <span class="st">"&lt;/tr&gt;"</span>;</div><div class="t code" style="left:0px;top:626px"></div></div>
<div class="a" style="left:1303px;top:126px;width:21px;height:636px;background:#f0f0f0"></div>
<svg class="a" style="left:1303px;top:126px" width="20" height="22" viewBox="0 0 20 22"><path d="M5.5 13 L10 8.5 L14.5 13" fill="none" stroke="#555" stroke-width="2.3"/></svg>
<div class="a" style="left:1303px;top:148px;width:19px;height:238px;background:#cdcdcd"></div>
<div class="a" style="left:1302px;top:762px;width:22px;height:21px;background:#f6f6f6"></div>
<svg class="a" style="left:1303px;top:740px" width="20" height="22" viewBox="0 0 20 22"><path d="M5.5 9 L10 13.5 L14.5 9" fill="none" stroke="#555" stroke-width="2.3"/></svg>
<div class="a" style="left:434px;top:762px;width:868px;height:20px;background:#f0f0f0"></div>
<div class="a" style="left:372px;top:782px;width:952px;height:2px;background:#fff"></div>
<div class="a" style="left:458px;top:763px;width:711px;height:19px;background:#cdcdcd"></div>
<svg class="a" style="left:434px;top:762px" width="24" height="20" viewBox="0 0 24 20"><path d="M14 6 L9.5 10.5 L14 15" fill="none" stroke="#555" stroke-width="2.3"/></svg>
<svg class="a" style="left:1279px;top:762px" width="24" height="20" viewBox="0 0 24 20"><path d="M9.5 6 L14 10.5 L9.5 15" fill="none" stroke="#555" stroke-width="2.3"/></svg>
<div class="a" style="left:372px;top:783px;width:951px;height:1px;background:#9a9a9a"></div>
<div class="a" style="left:372px;top:785px;width:951px;height:110px;background:#212121"></div>
<div class="a" style="left:372px;top:873px;width:951px;height:1px;background:#000"></div>
<div class="a" style="left:1323px;top:784px;width:2px;height:115px;background:#fff"></div>
<div class="a" style="left:371px;top:895px;width:954px;height:4px;background:#fff"></div>
<div class="a" style="left:371px;top:897px;width:954px;height:1px;background:#e6e6e6"></div>
<div class="a" style="left:1324px;top:784px;width:1px;height:114px;background:#e6e6e6"></div>
<div class="t fl" style="left:376px;top:792px">Goto:</div>
<div class="a" style="left:472px;top:789px;width:687px;height:21px;background:#fff;border:1px solid #c8c8c8"></div>
<div class="t fl" style="left:376px;top:821px">Find:</div>
<div class="a" style="left:472px;top:818px;width:687px;height:21px;background:#fff;border:1px solid #c8c8c8"></div>
<div class="t fl" style="left:376px;top:850px">Replace with:</div>
<div class="a" style="left:472px;top:847px;width:687px;height:21px;background:#fff;border:1px solid #c8c8c8"></div>
<svg class="a" style="left:1140px;top:822px" width="16" height="10" viewBox="0 0 16 10"><path d="M2 2 L8 8 L14 2" fill="none" stroke="#888" stroke-width="1.2"/></svg>
<svg class="a" style="left:1170px;top:823px" width="10" height="10" viewBox="0 0 10 10"><path d="M8 0.5 V9.5 L1 5 Z" fill="#fff"/></svg>
<svg class="a" style="left:1195px;top:823px" width="10" height="10" viewBox="0 0 10 10"><path d="M2 0.5 V9.5 L9 5 Z" fill="#fff"/></svg>
<svg class="a" style="left:1170px;top:852px" width="10" height="10" viewBox="0 0 10 10"><path d="M8 0.5 V9.5 L1 5 Z" fill="#fff"/></svg>
<svg class="a" style="left:1195px;top:852px" width="10" height="10" viewBox="0 0 10 10"><path d="M2 0.5 V9.5 L9 5 Z" fill="#fff"/></svg>
<div class="t fl" style="left:1216px;top:793px">Advanced...</div>
<svg class="a" style="left:1301px;top:793px" width="15" height="15" viewBox="0 0 15 15"><path d="M1.5 1.5 L13.5 13.5 M13.5 1.5 L1.5 13.5" stroke="#fff" stroke-width="2.2"/></svg>
<div class="t fl" style="left:1231px;top:821px">Find All</div>
<div class="t fl" style="left:1219px;top:850px">Replace All</div>
<div class="a ph" style="left:1327px;top:78px;width:4px;height:821px"></div>
<div class="a ph" style="left:1331px;top:78px;width:268px;height:20px"></div>
<div class="t hd" style="left:1335px;top:80px">Help</div>
<svg class="a" style="left:1584px;top:82px" width="11" height="11" viewBox="0 0 11 11"><path d="M1 1 L10 10 M10 1 L1 10" stroke="#9a9a9a" stroke-width="1.2"/></svg>
<div class="a" style="left:1331px;top:98px;width:268px;height:26px;background:#fff"></div>
<div class="a" style="left:1331px;top:99px;width:94px;height:25px;background:#fff"></div>
<div class="a" style="left:1425px;top:100px;width:84px;height:22px;background:#f0f0f0;border:1px solid #d8d8d8"></div>
<div class="a" style="left:1508px;top:100px;width:60px;height:22px;background:#f0f0f0;border:1px solid #d8d8d8"></div>
<div class="t ui" style="left:1345px;top:103px;color:#000">Commands</div>
<div class="t ui" style="left:1439px;top:104px;color:#000">Functions</div>
<div class="a" style="left:1509px;top:101px;width:51px;height:23px;overflow:hidden"><div class="t ui" style="left:14px;top:3px;color:#000">Classes</div></div>
<div class="a" style="left:1561px;top:99px;width:17px;height:22px;background:#c8c8c8;border:1px solid #c0c0c0"></div>
<svg class="a" style="left:1561px;top:99px" width="17" height="22" viewBox="0 0 17 22"><path d="M11 5.5 V15.5 L5.5 10.5 Z" fill="#999"/><rect x="11.5" y="5.5" width="1.5" height="10" fill="#f0f0f0"/></svg>
<div class="a" style="left:1580px;top:99px;width:18px;height:22px;background:#e8e8e8;border:1px solid #a8a8a8"></div>
<svg class="a" style="left:1580px;top:99px" width="18" height="22" viewBox="0 0 18 22"><path d="M6 5 V16 L12.5 10.5 Z" fill="#000"/></svg>
<div class="a" style="left:1333px;top:124px;width:265px;height:773px;background:#f8f8f8"></div>
<div class="a" style="left:1597px;top:98px;width:2px;height:801px;background:#fff"></div>
<div class="a" style="left:1333px;top:126px;width:241px;height:380px;overflow:hidden">
<div class="t hlh" style="left:3px;top:0px">/</div>
<div class="t hlp" style="left:28px;top:22px">/*</div>
<div class="t hlp" style="left:28px;top:44px">//</div>
<div class="t hlh" style="left:3px;top:66px">B</div>
<div class="t hlp" style="left:28px;top:88px">break</div>
<div class="t hlh" style="left:3px;top:110px">C</div>
<div class="t hlp" style="left:28px;top:132px">class</div>
<div class="t hlp" style="left:28px;top:154px">continue</div>
<div class="t hlh" style="left:3px;top:176px">D</div>
<div class="t hlp" style="left:28px;top:198px">do while</div>
<div class="t hlh" style="left:3px;top:220px">E</div>
<div class="t hlp" style="left:28px;top:242px">echo</div>
<div class="t hlh" style="left:3px;top:264px">F</div>
<div class="t hlp" style="left:28px;top:286px">for</div>
<div class="t hlp" style="left:28px;top:308px">foreach</div>
<div class="t hlp" style="left:28px;top:330px">function</div>
<div class="t hlh" style="left:3px;top:352px">G</div>
<div class="t hlp" style="left:28px;top:374px">global</div>
</div>
<div class="a" style="left:1574px;top:126px;width:20px;height:380px;background:#f0f0f0"></div>
<svg class="a" style="left:1574px;top:126px" width="20" height="20" viewBox="0 0 20 20"><path d="M5.5 12 L10 7.5 L14.5 12" fill="none" stroke="#555" stroke-width="2.3"/></svg>
<div class="a" style="left:1575px;top:145px;width:18px;height:213px;background:#cdcdcd"></div>
<svg class="a" style="left:1574px;top:485px" width="20" height="20" viewBox="0 0 20 20"><path d="M5.5 8 L10 12.5 L14.5 8" fill="none" stroke="#555" stroke-width="2.3"/></svg>
<div class="a" style="left:1333px;top:506px;width:261px;height:1px;background:#c8c8c8"></div>
<div class="a" style="left:1596px;top:124px;width:1px;height:774px;background:#dcdcdc"></div>
<div class="t" style="left:1340px;top:521px;font-family:'Liberation Serif',serif;font-weight:bold;font-size:15px;color:#000">About Command IntelliTips</div>
<div class="t serif" style="left:1340px;top:553px">The Commands tab displays command details</div>
<div class="t serif" style="left:1340px;top:569px">including keywords and the command</div>
<div class="t serif" style="left:1340px;top:585px">description.</div>
<div class="t serif" style="left:1340px;top:617px">Note that this is only a subset of the doc</div>
<div class="t serif" style="left:1340px;top:633px">available please see the complete doc in the</div>
<div class="t serif" style="left:1340px;top:649px">&quot;Home&quot; workspace.</div>
<div class="a" style="left:0;top:0;width:1600px;height:900px;border:1px solid #7a7a7a;pointer-events:none"></div>
</body></html>
